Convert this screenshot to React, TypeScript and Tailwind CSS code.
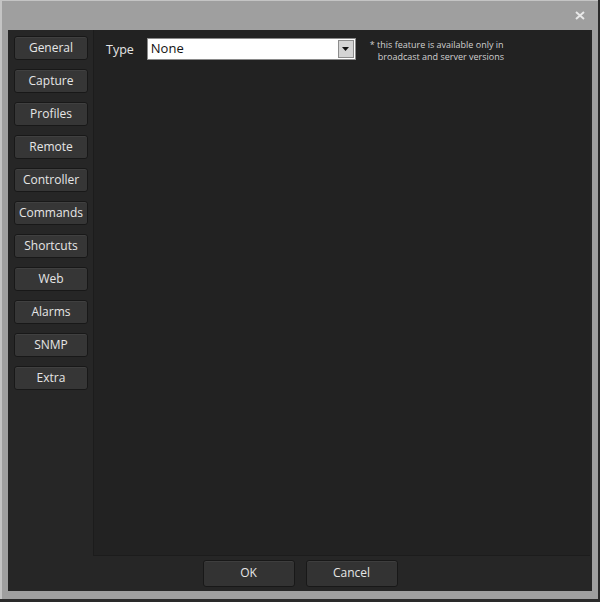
const tabs = ["General", "Capture", "Profiles", "Remote", "Controller", "Commands", "Shortcuts", "Web", "Alarms", "SNMP", "Extra"];

function SideButton({ label }: { label: string }) {
  return (
    <button className="h-[24px] w-[74px] rounded-[3px] border border-[#181818] bg-[#363636] text-[12px] leading-none text-[#e6e6e6] shadow-[inset_0_1px_0_#404040]">
      {label}
    </button>
  );
}

function FooterButton({ label }: { label: string }) {
  return (
    <button className="h-[27px] w-[92px] rounded-[3px] border border-[#181818] bg-[#333333] text-[12px] text-[#e6e6e6] shadow-[inset_0_1px_0_#3e3e3e]">
      {label}
    </button>
  );
}

export default function App() {
  return (
    <div className="h-[602px] w-[600px] bg-[#2a2a2a] font-['Open_Sans','Noto_Sans',sans-serif]">
      <div className="flex h-[599px] w-[598px] flex-col border-l-2 border-t border-[#c4c4c4] bg-[#9f9f9f]">
        <div className="flex h-[29px] items-center justify-end pr-[13px]">
          <svg width="10" height="9" viewBox="0 0 10 9">
            <path d="M1 1 L9 8 M9 1 L1 8" stroke="#e8e8e8" strokeWidth="2" />
          </svg>
        </div>
        <div className="mx-[6px] mb-[8px] flex flex-1 flex-col bg-[#262626]">
          <div className="flex flex-1">
            <div className="flex w-[85px] flex-col gap-[9px] bg-[#262626] pl-[6px] pt-[6px]">
              {tabs.map((t) => (
                <SideButton key={t} label={t} />
              ))}
            </div>
            <div className="mr-[2px] flex flex-1 items-start border-b border-l border-[#1c1c1c] bg-[#222222] pl-[12px] pt-[8px]">
              <span className="mt-[3px] text-[12.5px] text-[#e6e6e6]">Type</span>
              <div className="ml-[13px] flex h-[22px] w-[209px] items-center border border-[#8a8a8a] bg-white pl-[3px]">
                <span className="flex-1 text-[13px] text-[#111]">None</span>
                <div className="mr-[1px] flex h-[18px] w-[16px] items-center justify-center border border-[#8c8c8c] bg-[#d4d4d4]">
                  <svg width="7" height="4" viewBox="0 0 7 4">
                    <path d="M0 0 H7 L3.5 4 Z" fill="#111" />
                  </svg>
                </div>
              </div>
              <div className="ml-[14px] mt-[1px] text-[9px] leading-[12px] text-[#d0d0d0]">
                <div>* this feature is available only in</div>
                <div className="pl-[8px]">broadcast and server versions</div>
              </div>
            </div>
          </div>
          <div className="flex h-[35px] items-center justify-center gap-[11px] pb-[1px]">
            <FooterButton label="OK" />
            <FooterButton label="Cancel" />
          </div>
        </div>
      </div>
    </div>
  );
}
